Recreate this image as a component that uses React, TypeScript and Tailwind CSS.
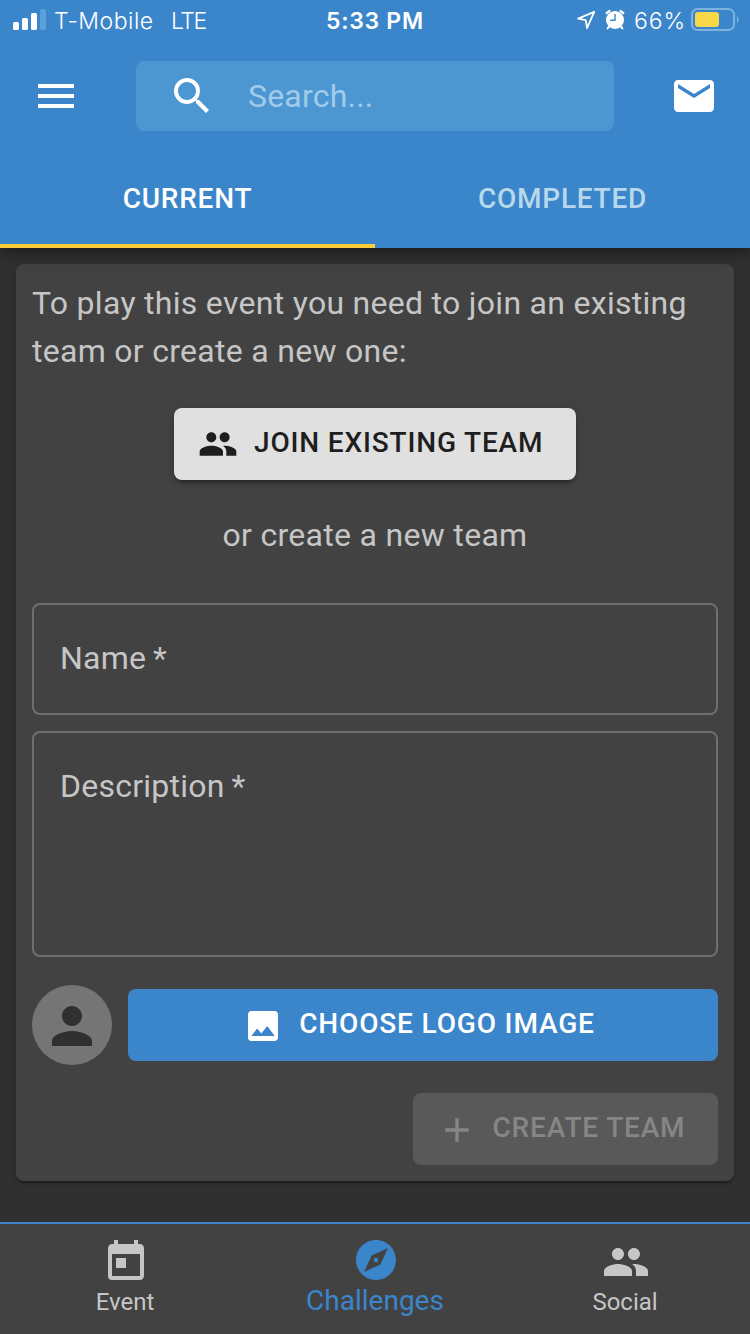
import type { ReactNode } from "react"
import clsx from "clsx"
import { MdAdd, MdExplore, MdImage, MdMail, MdMenu, MdPeople, MdPerson, MdSearch, MdToday } from "react-icons/md"

const navItems = [
  { label: "Event", icon: MdToday, active: false },
  { label: "Challenges", icon: MdExplore, active: true },
  { label: "Social", icon: MdPeople, active: false },
]

const StatusBar = () => (
  <div className="flex h-10 items-center font-['Inter',sans-serif] text-[23px] leading-10">
    <div className="flex w-[326px] items-center pl-[13px] font-[350]">
      <svg width="33" height="22" viewBox="0 0 33 22" fill="white">
        <rect x="0" y="13" width="6" height="8" rx="1.6" />
        <rect x="9" y="9" width="6" height="12" rx="1.6" />
        <rect x="18" y="4" width="6" height="17" rx="1.6" />
        <rect x="27" y="0" width="6" height="21" rx="1.6" fill="#5ba0d8" />
      </svg>
      <span className="ml-2 w-[117px] pt-0.5 tracking-[0.5px]">T-Mobile</span>
      <span className="pt-0.5 tracking-[-1.4px]">LTE</span>
    </div>
    <span className="w-[250px] pt-0.5 font-semibold tracking-[0.7px]">5:33 PM</span>
    <svg width="22" height="22" viewBox="0 0 22 22" fill="none" stroke="white" strokeWidth="1.8" strokeLinejoin="round">
      <path d="M18.2 2.8 2.2 9.6l7.6 1.6 1.2 8z" />
    </svg>
    <svg className="ml-[7px]" width="20" height="22" viewBox="0 0 20 22">
      <circle cx="10" cy="11" r="9" fill="white" />
      <path d="M1.8 4 4.4 2.1M18.2 4 15.6 2.1" stroke="white" strokeWidth="2.4" strokeLinecap="round" />
      <path d="M4.2 17.5 2.6 19.4M15.8 17.5l1.6 1.9" stroke="white" strokeWidth="2" strokeLinecap="round" />
      <path d="M10 5V11.3H5.2" stroke="#3b86cb" strokeWidth="1.4" fill="none" />
    </svg>
    <span className="ml-[9px] w-[57px] pt-0.5 font-[350] tracking-[0.9px]">66%</span>
    <svg width="48" height="24" viewBox="0 0 48 24">
      <rect x="1" y="1" width="42" height="21" rx="5.5" fill="none" stroke="#7db3e0" strokeWidth="2" />
      <rect x="4" y="4" width="24" height="15" rx="3" fill="#f8d748" />
      <path d="M46 8c2 1 2 6 0 7z" fill="#7db3e0" />
    </svg>
  </div>
)

const Tab = ({ children, active }: { children: ReactNode; active?: boolean }) => (
  <button
    className={clsx(
      "flex-1 border-b-4 pt-0.5 text-[28px] font-medium tracking-[0.75px] uppercase",
      active ? "border-[#fccd3b] text-white" : "border-transparent text-[#b8d8ec]",
    )}
  >
    {children}
  </button>
)

const ActionButton = ({ icon, children, className }: { icon: ReactNode; children: ReactNode; className: string }) => (
  <button className={clsx("flex h-[72px] items-center rounded-lg text-[28px] font-medium uppercase", className)}>
    <span className="mr-4 text-[40px]">{icon}</span>
    <span className="pb-0.5 leading-10 tracking-[0.84px]">{children}</span>
  </button>
)

const Field = ({ label, className }: { label: string; className: string }) => (
  <div className={clsx("rounded-lg border-2 border-[#6f6f6f] px-[26px] pt-[29px] tracking-[0.25px]", className)}>{label}&thinsp;*</div>
)

export default function App() {
  return (
    <div className="flex h-[1334px] w-[750px] flex-col overflow-hidden bg-[#303030] font-['Roboto',sans-serif] text-[32px] text-[#c6c6c6]">
      <header className="relative bg-[#3b86cb] text-white shadow-[0_4px_8px_-2px_rgba(0,0,0,0.2),0_8px_10px_rgba(0,0,0,0.14),0_2px_20px_rgba(0,0,0,0.12)]">
        <StatusBar />
        <div className="flex h-28 items-center px-8">
          <MdMenu className="size-12" />
          <div className="ml-14 flex h-[70px] w-[478px] items-center rounded-lg bg-[#4c97d2] px-8">
            <MdSearch className="size-12" />
            <span className="ml-8 tracking-[0.2px] text-[#a0cbea]">Search...</span>
          </div>
          <MdMail className="ml-14 size-12" />
        </div>
        <nav className="flex h-24">
          <Tab active>Current</Tab>
          <Tab>Completed</Tab>
        </nav>
      </header>

      <main className="flex-1 p-4">
        <section className="h-[917px] rounded-lg bg-[#424242] px-4 pt-[15px] shadow-[0_4px_2px_-2px_rgba(0,0,0,0.2),0_2px_2px_rgba(0,0,0,0.14),0_2px_6px_rgba(0,0,0,0.12)]">
          <p className="leading-[48px] tracking-[0.29px]">
            To play this event you need to join an existing team or create a new one:
          </p>
          <ActionButton
            icon={<MdPeople />}
            className="mx-auto mt-[33px] w-[402px] bg-[#e0e0e0] pl-6 text-[#1e1e1e] shadow-[0_6px_2px_-4px_rgba(0,0,0,0.2),0_4px_4px_rgba(0,0,0,0.14),0_2px_10px_rgba(0,0,0,0.12)]"
          >
            Join existing team
          </ActionButton>
          <p className="mt-[31px] text-center leading-[48px] tracking-[0.3px]">or create a new team</p>

          <Field label="Name" className="mt-11 h-28" />
          <Field label="Description" className="mt-4 h-[226px]" />

          <div className="mt-7 flex items-center gap-4">
            <div className="flex size-20 items-center justify-center rounded-full bg-[#757575] pt-0.5 text-[#303030]">
              <MdPerson className="size-[60px]" />
            </div>
            <ActionButton icon={<MdImage className="translate-y-px" />} className="flex-1 justify-center bg-[#3b86cb] pr-2 text-white">
              Choose logo image
            </ActionButton>
          </div>
          <ActionButton icon={<MdAdd className="translate-y-px" />} className="mt-7 ml-auto w-[305px] bg-[#595959] pl-[23.5px] text-[#868686]">
            Create team
          </ActionButton>
        </section>
      </main>

      <footer className="flex h-28 border-t-2 border-[#3b86cb] bg-[#424242]">
        {navItems.map(({ label, icon: Icon, active }) => (
          <div key={label} className={clsx("flex flex-1 flex-col items-center", active ? "pt-3 text-[#3b86cb]" : "pt-3.5")}>
            <Icon className="ml-0.5 size-12" />
            <span className={clsx("leading-8", active ? "pt-px text-[28px]" : "text-[24px]")}>{label}</span>
          </div>
        ))}
      </footer>
    </div>
  )
}
